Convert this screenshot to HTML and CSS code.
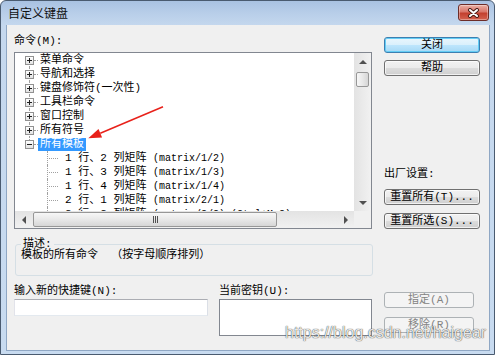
FILE: index.html
```html
<!DOCTYPE html>
<html lang="zh-CN">
<head>
  <meta charset="UTF-8" />
  <meta name="viewport" content="width=device-width, initial-scale=1.0" />
  <title>自定义键盘</title>
  <link rel="stylesheet" href="styles.css">
</head>
<body>
  <div class="window">
    <div class="titlebar">
      <span class="caption">自定义键盘</span>
      <button class="close" title="关闭">
        <svg width="13" height="10" viewBox="0 0 13 10">
          <path d="M3 2l7 6M10 2l-7 6" stroke="#4a1d16" stroke-width="4" stroke-linecap="round" />
          <path d="M3 2l7 6M10 2l-7 6" stroke="#fff" stroke-width="2" stroke-linecap="round" />
        </svg>
      </button>
    </div>

    <div class="client">
      <div class="commands">
        <div class="label">命令(M):</div>
        <div class="tree">
          <div class="tree-body">
            <div class="tree-rows">
              <ul class="nodes">
                <li class="node"><span class="box"></span><span class="tick"></span><span class="text">菜单命令</span></li>
                <li class="node"><span class="box"></span><span class="tick"></span><span class="text">导航和选择</span></li>
                <li class="node"><span class="box"></span><span class="tick"></span><span class="text">键盘修饰符(一次性)</span></li>
                <li class="node"><span class="box"></span><span class="tick"></span><span class="text">工具栏命令</span></li>
                <li class="node"><span class="box"></span><span class="tick"></span><span class="text">窗口控制</span></li>
                <li class="node"><span class="box"></span><span class="tick"></span><span class="text">所有符号</span></li>
                <li class="node open last"><span class="box"></span><span class="tick"></span><span class="text selected">所有模板</span></li>
              </ul>
              <ul class="leaves">
                <li class="leaf"><span class="tick"></span><span class="text">1 行、2 列矩阵 <span class="code">(matrix/1/2)</span></span></li>
                <li class="leaf"><span class="tick"></span><span class="text">1 行、3 列矩阵 <span class="code">(matrix/1/3)</span></span></li>
                <li class="leaf"><span class="tick"></span><span class="text">1 行、4 列矩阵 <span class="code">(matrix/1/4)</span></span></li>
                <li class="leaf"><span class="tick"></span><span class="text">2 行、1 列矩阵 <span class="code">(matrix/2/1)</span></span></li>
                <li class="leaf"><span class="tick"></span><span class="text">2 行、2 列矩阵 <span class="code">(matrix/2/2) (Ctrl+M,2)</span></span></li>
              </ul>
            </div>
            <div class="vscroll">
              <div class="sbtn"><i class="arr up"></i></div>
              <div class="track"><div class="thumb"></div></div>
              <div class="sbtn"><i class="arr down"></i></div>
            </div>
          </div>
          <div class="hscroll">
            <div class="sbtn"><i class="arr left"></i></div>
            <div class="track">
              <div class="thumb">
                <svg width="7" height="7" viewBox="0 0 7 7">
                  <path d="M1.5 0v7M3.5 0v7M5.5 0v7" stroke="#505050" />
                </svg>
              </div>
            </div>
            <div class="sbtn"><i class="arr right"></i></div>
            <div class="corner"></div>
          </div>
        </div>
      </div>

      <div class="side">
        <button class="btn default">关闭</button>
        <button class="btn help">帮助</button>
        <div class="reset">
          <div class="label">出厂设置:</div>
          <button class="btn">重置所有(T)...</button>
          <button class="btn">重置所选(S)...</button>
        </div>
      </div>

      <fieldset class="desc">
        <legend>描述:</legend>
        <p>模板的所有命令  （按字母顺序排列）</p>
      </fieldset>

      <div class="keys">
        <div class="field new-key">
          <div class="label">输入新的快捷键(N):</div>
          <input type="text" class="textbox">
        </div>
        <div class="field cur-key">
          <div class="label">当前密钥(U):</div>
          <div class="listbox"></div>
        </div>
      </div>

      <div class="assign">
        <button class="btn" disabled>指定(A)</button>
        <button class="btn" disabled>移除(R)</button>
      </div>
    </div>

    <!-- red annotation arrow drawn over the dialog -->
    <svg class="pointer" width="495" height="355" viewBox="0 0 495 355">
      <path d="M163 106.7L100.3 133.2" stroke="#e8211a" stroke-width="1.5" />
      <path d="M88.3 138.3L102.1 137.4L98.5 129.1Z" fill="#e8211a" />
    </svg>
    <div class="watermark">https://blog.csdn.net/haigear</div>
  </div>
</body>
</html>
```

FILE: styles.css
```css
* {
  box-sizing: border-box;
}

body {
  margin: 0;
  font: 11px/13px "Liberation Mono", "Noto Sans CJK SC", monospace;
  color: #000;
  background: #fff;
}

.window {
  position: relative;
  width: 495px;
  height: 355px;
  border: 1px solid #4a5b70;
  border-radius: 6px 6px 0 0;
  background: linear-gradient(#a9c2e2 0, #b8cee9 12px, #c5d8ee 25px, #c8dbf0 100%);
  padding: 0 4px 3px 5px;
  display: flex;
  flex-direction: column;
}

/* title bar */
.titlebar {
  height: 24px;
  display: flex;
  justify-content: space-between;
  align-items: flex-start;
  padding: 0 1px 0 2px;
}

.caption {
  font: 12px/24px "Noto Sans CJK SC", sans-serif;
  color: #111;
}

.close {
  width: 31px;
  height: 17px;
  margin-top: 3px;
  padding: 0;
  border: 1px solid #6d2d28;
  border-radius: 3px;
  background: linear-gradient(#eab0a4 0, #d9766a 45%, #c3402f 55%, #d4624f 100%);
  box-shadow: inset 0 0 0 1px rgba(255, 255, 255, 0.35);
  display: flex;
  align-items: center;
  justify-content: center;
}

/* client area */
.client {
  flex: 1;
  background: #f0f0f0;
  border: 1px solid #8fa7c4;
  border-top: none;
  padding-left: 7px;
  display: grid;
  grid-template-columns: 358px 96px;
  grid-template-rows: auto auto 1fr;
  column-gap: 12px;
  align-content: start;
}

.label {
  line-height: 13px;
  white-space: nowrap;
}

.commands .label {
  margin-top: 10px;
}

/* tree view */
.tree {
  margin-top: 4px;
  height: 177px;
  border: 1px solid #828790;
  background: #fff;
  display: flex;
  flex-direction: column;
}

.tree-body {
  display: flex;
  height: 158px;
}

.tree-rows {
  flex: 1;
  overflow: hidden;
}

.nodes,
.leaves {
  list-style: none;
  margin: 0;
  padding: 0;
}

.node,
.leaf {
  position: relative;
  height: 14px;
  display: flex;
  align-items: center;
  white-space: nowrap;
}

.node {
  padding-left: 10px;
}

.node::before {
  content: "";
  position: absolute;
  left: 14px;
  top: 0;
  bottom: 0;
  border-left: 1px dotted #a0a0a0;
}

.node:first-child::before {
  top: 7px;
}

.node.last::before {
  bottom: 7px;
}

.leaf::before {
  content: "";
  position: absolute;
  left: 32px;
  top: 0;
  bottom: 0;
  border-left: 1px dotted #a0a0a0;
}

.box {
  position: relative;
  z-index: 1;
  width: 9px;
  height: 9px;
  border: 1px solid #919191;
  background: linear-gradient(#ffffff, #e2e2e2);
}

.box::before {
  content: "";
  position: absolute;
  left: 1px;
  top: 3px;
  width: 5px;
  height: 1px;
  background: #1f1f1f;
}

.box::after {
  content: "";
  position: absolute;
  left: 3px;
  top: 1px;
  width: 1px;
  height: 5px;
  background: #1f1f1f;
}

.node.open .box::after {
  display: none;
}

.tick {
  height: 0;
  border-top: 1px dotted #a0a0a0;
}

.node .tick {
  width: 4px;
}

.leaf .tick {
  margin-left: 32px;
  width: 11px;
}

.text {
  padding: 0 2px;
  line-height: 13px;
}

.leaf .text {
  margin-left: 5px;
}

.code {
  font-size: 10px;
}

.text.selected {
  background: #3399ff;
  color: #fff;
}

/* scroll bars */
.vscroll {
  width: 17px;
  display: flex;
  flex-direction: column;
  background: linear-gradient(to right, #e3e3e3, #f1f1f1);
}

.sbtn {
  flex: none;
  width: 17px;
  height: 17px;
  display: flex;
  align-items: center;
  justify-content: center;
}

.vscroll .track {
  flex: 1;
  padding-top: 2px;
}

.vscroll .thumb {
  width: 13px;
  height: 15px;
  margin-left: 2px;
  border: 1px solid #979797;
  border-radius: 2px;
  background: linear-gradient(to right, #f7f7f7, #e8e8e8 50%, #d6d6d6);
}

.hscroll {
  height: 17px;
  display: flex;
  background: linear-gradient(#e3e3e3, #f1f1f1);
}

.hscroll .track {
  flex: 1;
  display: flex;
}

.hscroll .thumb {
  width: 244px;
  height: 15px;
  margin: 1px 0 0 1px;
  border: 1px solid #979797;
  border-radius: 2px;
  background: linear-gradient(#f7f7f7, #e8e8e8 50%, #d6d6d6);
  display: flex;
  align-items: center;
  justify-content: center;
}

.corner {
  width: 17px;
  background: #f0f0f0;
}

.arr {
  width: 0;
  height: 0;
  border: 4px solid transparent;
}

.arr.up {
  border-top: 0;
  border-bottom-color: #505050;
}

.arr.down {
  border-bottom: 0;
  border-top-color: #505050;
}

.arr.left {
  border-left: 0;
  border-right-color: #505050;
}

.arr.right {
  border-right: 0;
  border-left-color: #505050;
}

/* buttons */
.btn {
  display: block;
  width: 96px;
  height: 16px;
  padding: 0;
  font: inherit;
  line-height: 13px;
  color: #000;
  border: 1px solid #707070;
  border-radius: 3px;
  background: linear-gradient(#f2f2f2 0, #ebebeb 50%, #dddddd 50%, #cfcfcf 100%);
  box-shadow: inset 0 0 0 1px rgba(255, 255, 255, 0.7);
}

.btn.default {
  border-color: #3c7fb1;
  background: linear-gradient(#eaf6fd 0, #d9f0fc 50%, #bee6fd 50%, #a7d9f5 100%);
  box-shadow: inset 0 0 0 1px #64cdf5;
}

.btn:disabled {
  color: #838383;
  border-color: #adb2b5;
  background: #f4f4f4;
  box-shadow: none;
}

.side {
  display: flex;
  flex-direction: column;
}

.side .default {
  margin-top: 12px;
}

.side .help {
  margin-top: 7px;
}

.reset {
  margin-top: auto;
}

.reset .label {
  margin-bottom: 8px;
}

.reset .btn + .btn {
  margin-top: 8px;
}

/* description group */
.desc {
  grid-column: 1;
  margin: 9px -1px 0 1px;
  padding: 0 5px 13px;
  border: 1px solid #d5dfe5;
  border-radius: 3px;
  min-width: 0;
}

.desc legend {
  padding: 0 2px;
  line-height: 13px;
}

.desc p {
  margin: -2px 0 0;
  line-height: 13px;
  white-space: pre;
}

/* shortcut keys */
.keys {
  grid-column: 1;
  margin-top: 9px;
  display: flex;
  gap: 11px;
}

.new-key {
  width: 194px;
}

.cur-key {
  flex: 1;
}

.textbox {
  display: block;
  width: 100%;
  height: 17px;
  margin: 1px 0 0;
  padding: 0;
  border: 1px solid;
  border-color: #abadb3 #dbdfe6 #e3e9ef #e2e3ea;
  background: #fff;
}

.listbox {
  height: 37px;
  margin-top: 1px;
  border: 1px solid #828790;
  background: #fff;
}

.assign {
  grid-column: 2;
  margin-top: 16px;
}

.assign .btn {
  width: 90px;
}

.assign .btn + .btn {
  margin-top: 9px;
}

/* overlays */
.pointer {
  position: absolute;
  left: -1px;
  top: -1px;
  pointer-events: none;
}

.watermark {
  position: absolute;
  left: 284px;
  top: 324px;
  font: 16px/16px "Liberation Sans", sans-serif;
  color: rgba(255, 255, 255, 0.9);
  text-shadow: 0 0 1px rgba(0, 0, 0, 0.6), 0 0 1px rgba(0, 0, 0, 0.6);
  white-space: nowrap;
  pointer-events: none;
}
```
